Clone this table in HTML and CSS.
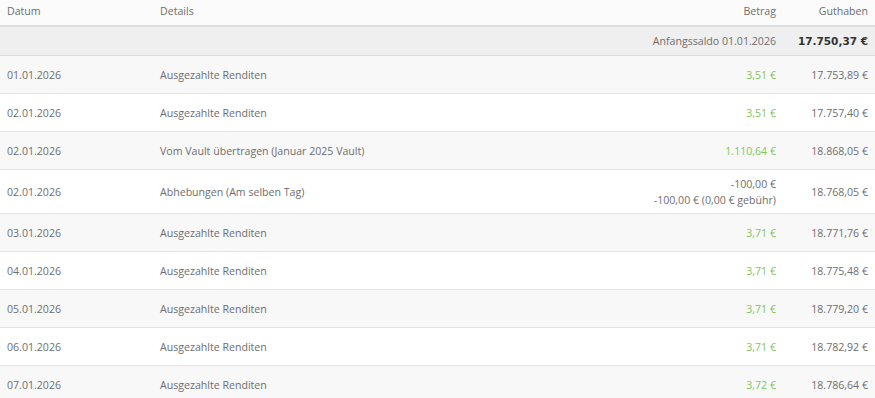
FILE: index.html
```html
<!DOCTYPE html>
<html lang="de">
<head>
<meta charset="utf-8">
<link rel="stylesheet" href="styles.css">
</head>
<body>
<div class="table">
  <div class="row head">
    <div class="c date">Datum</div>
    <div class="c details">Details</div>
    <div class="c amount">Betrag</div>
    <div class="c balance">Guthaben</div>
  </div>
  <div class="row opening">
    <div class="c date"></div>
    <div class="c details"></div>
    <div class="c amount">Anfangssaldo 01.01.2026</div>
    <div class="c balance strong">17.750,37 €</div>
  </div>
  <div class="row alt">
    <div class="c date">01.01.2026</div>
    <div class="c details">Ausgezahlte Renditen</div>
    <div class="c amount pos">3,51 €</div>
    <div class="c balance">17.753,89 €</div>
  </div>
  <div class="row">
    <div class="c date">02.01.2026</div>
    <div class="c details">Ausgezahlte Renditen</div>
    <div class="c amount pos">3,51 €</div>
    <div class="c balance">17.757,40 €</div>
  </div>
  <div class="row alt">
    <div class="c date">02.01.2026</div>
    <div class="c details">Vom Vault übertragen (Januar 2025 Vault)</div>
    <div class="c amount pos">1.110,64 €</div>
    <div class="c balance">18.868,05 €</div>
  </div>
  <div class="row tall">
    <div class="c date">02.01.2026</div>
    <div class="c details">Abhebungen (Am selben Tag)</div>
    <div class="c amount"><span>-100,00 €</span><span>-100,00 € (0,00 € gebühr)</span></div>
    <div class="c balance">18.768,05 €</div>
  </div>
  <div class="row alt">
    <div class="c date">03.01.2026</div>
    <div class="c details">Ausgezahlte Renditen</div>
    <div class="c amount pos">3,71 €</div>
    <div class="c balance">18.771,76 €</div>
  </div>
  <div class="row">
    <div class="c date">04.01.2026</div>
    <div class="c details">Ausgezahlte Renditen</div>
    <div class="c amount pos">3,71 €</div>
    <div class="c balance">18.775,48 €</div>
  </div>
  <div class="row alt">
    <div class="c date">05.01.2026</div>
    <div class="c details">Ausgezahlte Renditen</div>
    <div class="c amount pos">3,71 €</div>
    <div class="c balance">18.779,20 €</div>
  </div>
  <div class="row">
    <div class="c date">06.01.2026</div>
    <div class="c details">Ausgezahlte Renditen</div>
    <div class="c amount pos">3,71 €</div>
    <div class="c balance">18.782,92 €</div>
  </div>
  <div class="row alt">
    <div class="c date">07.01.2026</div>
    <div class="c details">Ausgezahlte Renditen</div>
    <div class="c amount pos">3,72 €</div>
    <div class="c balance">18.786,64 €</div>
  </div>
</div>
</body>
</html>
```

FILE: styles.css
```css
html, body {
  margin: 0;
  padding: 0;
  background: #ffffff;
}
body {
  font-family: "Open Sans", "Noto Sans", sans-serif;
  font-size: 10.6px;
  color: #6e6e6e;
}
.table {
  display: flex;
  flex-direction: column;
  width: 875px;
}
.row {
  display: grid;
  grid-template-columns: 160px 323px 293px 99px;
  height: 37px;
  align-items: center;
  border-bottom: 1px solid #e4e4e4;
  background: #ffffff;
}
.row.alt {
  background: #f8f8f8;
}
.row.head {
  height: 25px;
  background: #fbfbfb;
  border-bottom: 2px solid #dedede;
}
.row.head .c {
  margin-top: -3px;
}
.row.opening {
  height: 28px;
  background: #efefef;
  border-bottom: 1px solid #dcdcdc;
}
.row.tall {
  height: 43px;
}
.c {
  white-space: nowrap;
}
.date {
  padding-left: 7px;
}
.amount, .balance {
  text-align: right;
}
.balance {
  padding-right: 7px;
}
.amount {
  display: flex;
  flex-direction: column;
  align-items: flex-end;
  line-height: 16px;
}
.pos {
  color: #85c456;
}
.strong {
  font-family: "DejaVu Sans", sans-serif;
  font-weight: bold;
  color: #333333;
  font-size: 10.5px;
}
```
